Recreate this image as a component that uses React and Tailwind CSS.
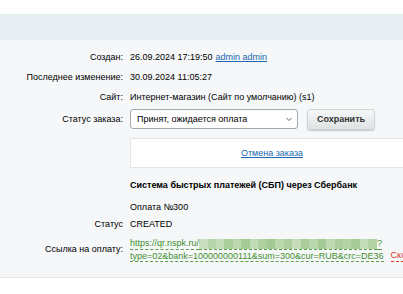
const blur = [
  "bg-[#c9dfc0]", "bg-[#b7d5aa]", "bg-[#c4dcba]", "bg-[#aacd9b]", "bg-[#bdd8b1]",
  "bg-[#a6ca96]", "bg-[#c2dbb7]", "bg-[#b0d0a2]", "bg-[#a3c893]", "bg-[#bbd7ae]",
  "bg-[#afcfa0]", "bg-[#c6ddbc]", "bg-[#a9cc99]", "bg-[#b9d6ac]", "bg-[#a5c995]",
  "bg-[#bfd9b3]", "bg-[#acce9d]", "bg-[#b4d3a6]", "bg-[#a8cb98]", "bg-[#c3dcb8]",
  "bg-[#b2d1a4]",
];

const Row = ({ label, children, className = "h-[20px]" }) => (
  <div className={`flex items-center ${className}`}>
    <div className="w-[123px] shrink-0 text-right text-[#000]">{label}</div>
    <div className="ml-[7px] flex items-center">{children}</div>
  </div>
);

export default function App() {
  return (
    <div className="w-[403px] h-[294px] overflow-hidden bg-white text-[9px] leading-[11px] text-black font-['Liberation_Sans',Arial,sans-serif]">
      <div className="h-[14px] bg-white" />
      <div className="h-[26px] bg-[#e6eef1]" />
      <div className="bg-[#f5f7f8] pt-[7px] pb-[15px] border-b border-[#e3e7e8]">
        <Row label="Создан:">
          <span>26.09.2024 17:19:50</span>
          <span className="ml-[3px] text-[#2067b0] underline">admin admin</span>
        </Row>
        <Row label="Последнее изменение:">
          <span>30.09.2024 11:05:27</span>
        </Row>
        <Row label="Сайт:">
          <span>Интернет-магазин (Сайт по умолчанию) (s1)</span>
        </Row>
        <Row label="Статус заказа:" className="h-[24px]">
          <div className="w-[168px] h-[20px] bg-white border border-[#a3a8ab] rounded-[3px] flex items-center justify-between pl-[6px] pr-[4px]">
            <span>Принят, ожидается оплата</span>
            <svg width="8" height="8" viewBox="0 0 8 8" fill="none" stroke="#555" strokeWidth="0.9">
              <path d="M1.5 3 L4 5.5 L6.5 3" />
            </svg>
          </div>
          <button className="ml-[9px] w-[68px] h-[21px] rounded-[3px] bg-gradient-to-b from-[#f6f8f8] to-[#dde2e3] border border-[#cfd5d7] shadow-[0_1px_1px_rgba(0,0,0,0.2)] font-bold text-[#333]">
            Сохранить
          </button>
        </Row>
        <div className="ml-[130px] mt-[7px] w-[290px] h-[30px] bg-white border border-[#e1e5e6] flex items-center justify-center pr-[6px]">
          <span className="text-[#2067b0] underline">Отмена заказа</span>
        </div>
        <div className="ml-[130px] mt-[7px] h-[20px] flex items-center font-bold">
          Система быстрых платежей (СБП) через Сбербанк
        </div>
        <div className="ml-[130px] mt-[3px] h-[18px] flex items-center">Оплата №300</div>
        <Row label="Статус" className="h-[17px]">
          <span>CREATED</span>
        </Row>
        <div className="mt-[4px] flex items-center">
          <div className="w-[123px] shrink-0 text-right">Ссылка на оплату:</div>
          <div className="ml-[7px] flex items-end leading-[12px] shrink-0">
            <div className="text-[#3f8f2f] shrink-0">
              <div className="flex items-end">
                <span className="shrink-0 border-b border-dashed border-[#5aa04a]">https://qr.nspk.ru/</span>
                <span className="flex shrink-0 h-[11px] w-[178px] border-b border-dashed border-[#5aa04a]">
                  {blur.map((c, i) => (
                    <span key={i} className={`flex-1 ${c}`} />
                  ))}
                </span>
                <span className="shrink-0 border-b border-dashed border-[#5aa04a]">?</span>
              </div>
              <div className="whitespace-nowrap">
                <span className="border-b border-dashed border-[#5aa04a]">
                  type=02&amp;bank=100000000111&amp;sum=300&amp;cur=RUB&amp;crc=DE36
                </span>
              </div>
            </div>
            <span className="ml-[7px] shrink-0 text-[#d9362b] border-b border-dashed border-[#d9362b] whitespace-nowrap">
              Скопировать
            </span>
          </div>
        </div>
      </div>
    </div>
  );
}
